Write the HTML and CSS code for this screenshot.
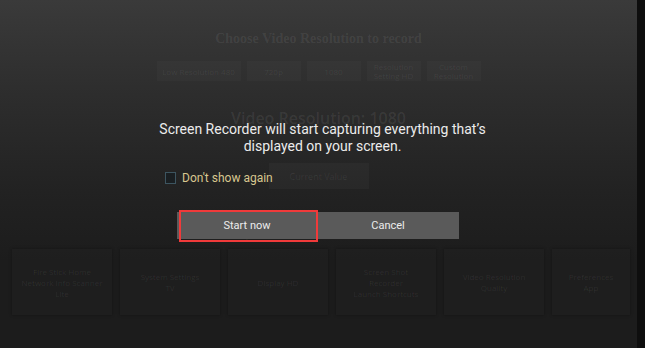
FILE: index.html
```html
<!DOCTYPE html>
<html lang="en">
<head>
    <meta charset="UTF-8">
    <meta name="viewport" content="width=device-width, initial-scale=1.0">
    <title>Screen Recorder</title>
    <link rel="stylesheet" href="styles.css">
</head>
<body>
    <div class="screen">
        <div class="app">
            <h2 class="app-title">Choose Video Resolution to record</h2>
            <div class="options">
                <div class="option">Low Resolution 480</div>
                <div class="option">720p</div>
                <div class="option">1080</div>
                <div class="option">Resolution<br>Setting HD</div>
                <div class="option">Custom<br>Resolution</div>
            </div>
            <h3 class="app-sub">Video Resolution: 1080</h3>
            <div class="picked">Current Value</div>
            <h3 class="app-sub small">Quick Launch Shortcuts</h3>
            <div class="tiles">
                <div class="tile">Fire Stick Home<br>Network Info Scanner<br>Lite</div>
                <div class="tile">System Settings<br>TV</div>
                <div class="tile">Display HD</div>
                <div class="tile">Screen Shot<br>Recorder<br>Launch Shortcuts</div>
                <div class="tile">Video Resolution<br>Quality</div>
                <div class="tile">Preferences<br>App</div>
            </div>
        </div>
        <div class="edge"></div>

        <div class="dialog">
            <p class="message">Screen Recorder will start capturing everything that’s<br>displayed on your screen.</p>
            <label class="check"><span class="box"></span>Don't show again</label>
            <div class="buttons">
                <button class="btn focused">Start now</button>
                <button class="btn">Cancel</button>
            </div>
        </div>
    </div>
</body>
</html>
```

FILE: styles.css
```css
* {
    box-sizing: border-box;
}

body {
    margin: 0;
    width: 645px;
    height: 348px;
    overflow: hidden;
    font-family: "Open Sans", Arial, sans-serif;
    background: #1c1c1c;
}

.screen {
    position: relative;
    display: flex;
    width: 645px;
    height: 348px;
}

.app {
    flex: 1;
    display: flex;
    flex-direction: column;
    align-items: center;
    padding-top: 31px;
    background: linear-gradient(#3a3a3a, #2e2e2e 25%, #222 55%, #1c1c1c 75%);
    color: rgba(255, 255, 255, 0.08);
}

.edge {
    width: 8px;
    background: #0e0e0e;
}

.app-title {
    margin: 0;
    font-family: "Liberation Serif", serif;
    font-size: 14px;
    font-weight: bold;
}

.options {
    display: flex;
    gap: 6px;
    margin-top: 14px;
}

.option {
    width: 54px;
    height: 20px;
    font-size: 8px;
    line-height: 9px;
    display: flex;
    align-items: center;
    justify-content: center;
    text-align: center;
    background: rgba(255, 255, 255, 0.025);
}

.option:first-child {
    width: 84px;
}

.app-sub {
    margin: 26px 0 0;
    font-size: 16px;
    font-weight: 600;
}

.app-sub.small {
    margin-top: 33px;
    font-size: 14px;
}

.picked {
    width: 100px;
    height: 26px;
    margin-top: 34px;
    font-size: 9px;
    display: flex;
    align-items: center;
    justify-content: center;
    background: rgba(255, 255, 255, 0.03);
}

.tiles {
    display: flex;
    gap: 8px;
    margin-top: 8px;
    align-self: stretch;
    padding-left: 12px;
}

.tile {
    width: 100px;
    height: 66px;
    flex-shrink: 0;
    font-size: 8px;
    line-height: 11px;
    display: flex;
    align-items: center;
    justify-content: center;
    text-align: center;
    background: rgba(255, 255, 255, 0.012);
    box-shadow: 0 0 3px rgba(0, 0, 0, 0.35);
}

.tile:last-child {
    width: 78px;
}

.dialog {
    position: absolute;
    left: 0;
    top: 121px;
    width: 645px;
    display: flex;
    flex-direction: column;
    align-items: center;
}

.message {
    margin: 0;
    font-family: Roboto, Arial, sans-serif;
    font-size: 14px;
    line-height: 17px;
    color: #ececec;
    text-align: center;
}

.check {
    align-self: flex-start;
    display: flex;
    align-items: center;
    gap: 6px;
    margin: 16px 0 0 165px;
    font-family: Roboto, Arial, sans-serif;
    font-size: 12px;
    color: #d8c78f;
}

.box {
    width: 11px;
    height: 12px;
    border: 1px solid #3d5560;
    background: #1a1f22;
}

.buttons {
    display: flex;
    margin: 27px 0 0 -10px;
    background: #5a5a5a;
}

.btn {
    position: relative;
    width: 141px;
    height: 27px;
    border: none;
    background: #5a5a5a;
    color: #ececec;
    font-family: Roboto, Arial, sans-serif;
    font-size: 11px;
    padding: 0;
}

/* red highlight box drawn over the focused button */
.btn.focused::after {
    content: "";
    position: absolute;
    left: 2px;
    right: 0;
    top: -2px;
    bottom: -3px;
    border: 2px solid #f03a3a;
}
```
